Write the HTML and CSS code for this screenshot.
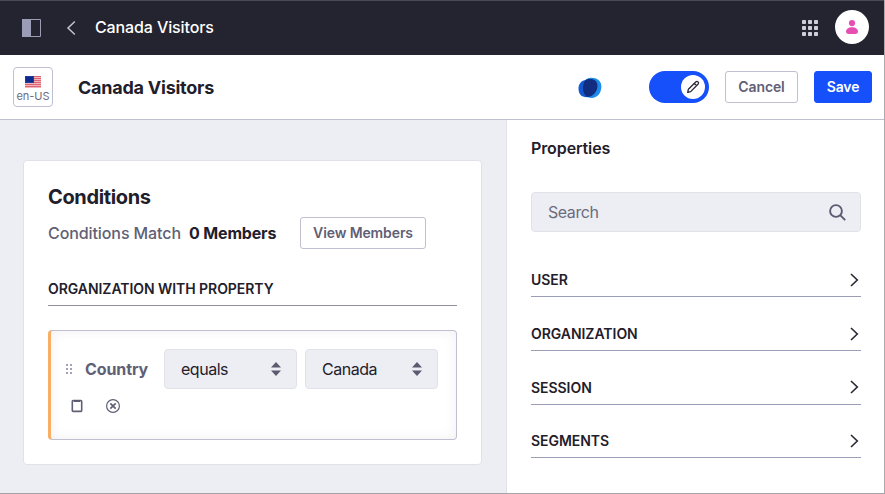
FILE: index.html
```html
<!DOCTYPE html>
<html lang="en">
<head>
<meta charset="utf-8">
<title>Canada Visitors</title>
<link rel="stylesheet" href="styles.css">
</head>
<body>
<div class="window">
  <header class="navbar">
    <svg class="panel-icon" width="20" height="18" viewBox="0 0 20 18"><path d="M.5.5h18v17H.5z" fill="none" stroke="#9b9cb5"/><path d="M0 0h9v18H0z" fill="#9b9cb5"/></svg>
    <svg class="back-icon" width="10" height="16" viewBox="0 0 10 16"><path d="M8.800 1.500 2 8l6.800 6.500" fill="none" stroke="#c2c2d3" stroke-width="1.5"/></svg>
    <span class="nav-title">Canada Visitors</span>
    <svg class="apps-icon" width="16" height="16" viewBox="0 0 16 16" fill="#cdced9"><rect width="4" height="4" rx=".7"/><rect x="6" width="4" height="4" rx=".7"/><rect x="12" width="4" height="4" rx=".7"/><rect y="6" width="4" height="4" rx=".7"/><rect x="6" y="6" width="4" height="4" rx=".7"/><rect x="12" y="6" width="4" height="4" rx=".7"/><rect y="12" width="4" height="4" rx=".7"/><rect x="6" y="12" width="4" height="4" rx=".7"/><rect x="12" y="12" width="4" height="4" rx=".7"/></svg>
    <span class="avatar"><svg width="12" height="14" viewBox="0 0 12 14" fill="#e64eb4"><circle cx="6" cy="3.100" r="3.100"/><path d="M6 7.200c3.600 0 6 1.900 6 4.300 0 1.700-1.300 2.500-3 2.500H3c-1.700 0-3-.8-3-2.500 0-2.400 2.400-4.300 6-4.300z"/></svg></span>
  </header>
  <div class="toolbar">
    <div class="locale">
      <svg width="16" height="12" viewBox="0 0 16 12"><path fill="#f3b4bb" d="M0 0h16v12H0z"/><path stroke="#db6473" stroke-width="1" d="M0 .5h16M0 2.500h16M0 4.500h16M0 6.500h16M0 8.500h16M0 10.500h16"/><path fill="#1c3f9c" d="M0 0h9v7H0z"/><path fill="#0b2a8c" d="M1 1h7v5H1z"/></svg>
      <span>en-US</span>
    </div>
    <h1 class="title">Canada Visitors</h1>
    <svg class="brand" width="24" height="22" viewBox="0 0 24 22"><path fill="#1c8ceb" d="M12.500.7C18.500.4 23.500 3.500 23.400 9.500 23.300 16 19.500 21 13.500 21 8.500 21 5 17 5 11 5 5 7.500 1 12.500.7z"/><path fill="#1258d0" d="M8 3C3.500 3.200.3 7 .5 12 .7 17 3.500 20.200 8.500 20.200 14.500 20.200 19 15 19 9 19 5 14 2.700 8 3z"/><path fill="#122c80" d="M12 2C16.500 1.900 19.600 4.500 19.500 8.800 19.400 14.500 15 19.800 9.500 19.900 6.500 18.500 5 15 5 11 5.100 7 6.500 3.500 8.500 2.500 9.500 2.100 10.500 2 12 2z"/></svg>
    <div class="toggle"><span class="knob"><svg width="14" height="14" viewBox="0 0 14 14" fill="none" stroke="#272833" stroke-width="1.300" stroke-linejoin="round"><path d="M1.700 12.300 2.400 9.200 9.700 2Q11 .9 12 1.900 13.100 3 11.900 4.300L4.700 11.600zM8.300 3.400l2.200 2.200"/></svg></span></div>
    <button class="btn cancel">Cancel</button>
    <button class="btn save">Save</button>
  </div>
  <div class="body">
    <main class="main">
      <section class="card">
        <h2 class="card-title">Conditions</h2>
        <div class="match">
          <span class="match-label">Conditions Match</span>
          <b class="match-count">0 Members</b>
          <button class="btn view">View Members</button>
        </div>
        <h3 class="group">ORGANIZATION WITH PROPERTY</h3>
        <div class="criteria">
          <div class="row">
            <svg class="drag" width="7" height="11" viewBox="0 0 7 11" fill="#a2a3b8"><path d="M0 0h2v2H0zM4 0h2v2H4zM0 4h2v2H0zM4 4h2v2H4zM0 8h2v2H0zM4 8h2v2H4z"/></svg>
            <span class="field">Country</span>
            <div class="select"><span>equals</span><svg width="10" height="14" viewBox="0 0 10 14" fill="#5a5b70"><path d="M5 0 10 5.500H0zM5 14 10 8.500H0z"/></svg></div>
            <div class="select"><span>Canada</span><svg width="10" height="14" viewBox="0 0 10 14" fill="#5a5b70"><path d="M5 0 10 5.500H0zM5 14 10 8.500H0z"/></svg></div>
          </div>
          <div class="actions">
            <svg width="12" height="14" viewBox="0 0 12 14"><rect x="1.300" y="1.600" width="9.400" height="10.800" rx=".8" fill="none" stroke="#5f6075" stroke-width="1.600"/><path d="M3 1h6v2H3z" fill="#5a5b70"/></svg>
            <svg width="14" height="14" viewBox="0 0 14 14" fill="none" stroke="#5f6075"><circle cx="7" cy="7" r="6.400" stroke-width="1.200"/><path d="m4.300 4.300 5.400 5.400m0-5.400L4.300 9.700" stroke-width="1.700"/></svg>
          </div>
        </div>
      </section>
    </main>
    <aside class="sidebar">
      <h2 class="side-title">Properties</h2>
      <div class="search"><span>Search</span><svg width="17" height="17" viewBox="0 0 17 17" fill="none" stroke="#5a5b70" stroke-width="1.900"><circle cx="7" cy="7" r="5.900"/><path d="m11.200 11.200 5 5"/></svg></div>
      <div class="item"><span>USER</span><svg width="9" height="14" viewBox="0 0 9 14"><path d="m1 1 6.300 6L1 13"/></svg></div>
      <div class="item"><span>ORGANIZATION</span><svg width="9" height="14" viewBox="0 0 9 14"><path d="m1 1 6.300 6L1 13"/></svg></div>
      <div class="item session"><span>SESSION</span><svg width="9" height="14" viewBox="0 0 9 14"><path d="m1 1 6.300 6L1 13"/></svg></div>
      <div class="item"><span>SEGMENTS</span><svg width="9" height="14" viewBox="0 0 9 14"><path d="m1 1 6.300 6L1 13"/></svg></div>
    </aside>
  </div>
</div>
</body>
</html>
```

FILE: styles.css
```css
* { box-sizing: border-box; }
body { margin: 0; font-family: Inter, "Liberation Sans", sans-serif; font-size: 16px; color: #1f202b; }
h1, h2, h3 { margin: 0; }
svg { display: block; flex: none; }
span, b, h1, h2, h3 { white-space: nowrap; }

.window { width: 885px; height: 494px; display: flex; flex-direction: column; border-right: 1px solid #aaaaad; border-bottom: 1px solid #a5a5a9; overflow: hidden; }

.navbar { height: 55px; flex: none; background: #242430; border-top: 1px solid #4a4a54; display: flex; align-items: center; padding: 0 15px 0 22px; }
.back-icon { margin-left: 24px; }
.nav-title { margin-left: 19px; padding-bottom: 2px; color: #fff; font-weight: 500; letter-spacing: -.12px; }
.apps-icon { margin-left: auto; }
.avatar { width: 34px; height: 34px; margin-left: 17px; margin-bottom: 2px; border-radius: 50%; background: #fff; display: flex; align-items: center; justify-content: center; }

.toolbar { height: 65px; flex: none; background: #fff; border-bottom: 1px solid #bfc0cf; display: flex; align-items: center; padding: 0 12px 0 13px; }
.locale { width: 40px; height: 40px; padding-top: 4px; border: 1px solid #bfc0d2; border-radius: 4px; display: flex; flex-direction: column; align-items: center; justify-content: center; gap: 2px; font-size: 11px; line-height: 13px; color: #6b6c7e; }
.title { margin-left: 25px; font-size: 18px; font-weight: 700; letter-spacing: -.24px; }
.brand { margin: 2px 0 0 auto; }
.toggle { width: 60px; height: 32px; margin-left: 47px; border-radius: 16px; background: #1550fa; display: flex; align-items: center; justify-content: flex-end; padding: 4px; }
.knob { width: 24px; height: 24px; border-radius: 50%; background: #fff; display: flex; align-items: center; justify-content: center; }
.btn { height: 32px; padding: 0; border: 1px solid #bfc0d2; border-radius: 3px; background: #fff; color: #5f6075; font: 600 14px/1 Inter, "Liberation Sans", sans-serif; letter-spacing: -.12px; white-space: nowrap; }
.cancel { width: 73px; margin-left: 16px; }
.save { width: 58px; margin-left: 16px; border-color: #1550fa; background: #1550fa; color: #fff; }

.body { flex: 1; min-height: 0; display: flex; }
.main { width: 506px; flex: none; background: #edeef3; padding: 40px 24px 28px 23px; }
.card { height: 305px; background: #fff; border: 1px solid #e1e2e9; border-radius: 4px; padding: 24px; }
.card-title { font-size: 20px; line-height: 24px; font-weight: 700; letter-spacing: -.36px; }
.match { display: flex; align-items: center; margin-top: 8px; height: 32px; }
.match-label { width: 141px; color: #5f6075; font-weight: 500; letter-spacing: -.09px; }
.match-count { width: 111px; font-weight: 700; letter-spacing: -.16px; }
.view { width: 126px; }
.group { height: 33px; margin-top: 24px; border-bottom: 1px solid #9091a0; font-size: 14px; line-height: 31px; font-weight: 600; letter-spacing: -.06px; }
.criteria { height: 110px; margin-top: 24px; border: 1px solid #c0c0d0; border-left: 3px solid #f7ae65; border-radius: 4px; box-shadow: inset 0 0 12px rgba(39,40,51,.07); padding: 18px 18px 0 15px; }
.row { display: flex; align-items: center; }
.field { width: 79px; margin-left: 12px; color: #5f6075; font-weight: 700; letter-spacing: -.1px; }
.select { width: 133px; height: 40px; border: 1px solid #e1e2e9; border-radius: 4px; background: #edeef3; display: flex; align-items: center; justify-content: space-between; padding: 0 15px 0 16px; letter-spacing: -.48px; }
.select + .select { margin-left: 8px; }
.actions { display: flex; align-items: center; gap: 23px; margin: 10px 0 0 5px; }

.sidebar { flex: 1; background: #fff; border-left: 1px solid #e1e2e9; padding: 16px 23px 0 24px; }
.side-title { font-size: 16px; line-height: 24px; font-weight: 600; letter-spacing: -.1px; }
.search { height: 40px; margin: 32px 0 33px; border: 1px solid #e1e2e9; border-radius: 4px; background: #edeef3; color: #6b6c7e; display: flex; align-items: center; justify-content: space-between; padding: 0 14px 0 16px; letter-spacing: -.45px; }
.item { height: 32px; margin-bottom: 22px; padding: 0 2px 2px 0; border-bottom: 1px solid #9b9cb5; display: flex; align-items: center; justify-content: space-between; font-size: 14px; font-weight: 600; letter-spacing: -.05px; }
.item svg { fill: none; stroke: #272833; stroke-width: 1.6; }
.session { margin-bottom: 21px; }
.session svg { margin-bottom: 2px; }
```
